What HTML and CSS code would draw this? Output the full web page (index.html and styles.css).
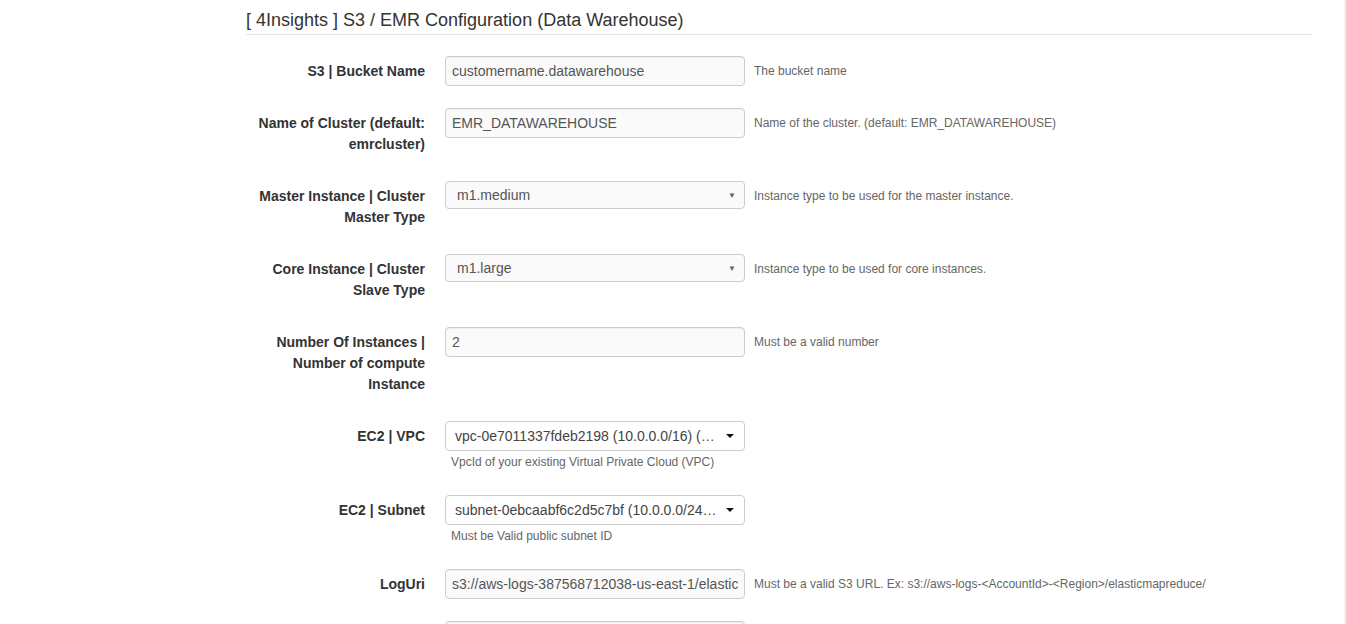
FILE: index.html
```html
<!DOCTYPE html>
<html lang="en">
<head>
    <meta charset="UTF-8">
    <meta name="viewport" content="width=device-width, initial-scale=1.0">
    <title>4Insights - S3 / EMR Configuration</title>
    <link rel="stylesheet" href="styles.css">
</head>
<body>
    <div class="page">
        <h3 class="section-title">[ 4Insights ] S3 / EMR Configuration (Data Warehouse)</h3>

        <form class="config-form">
            <div class="form-group">
                <label class="control-label">S3 | Bucket Name</label>
                <input class="form-control" type="text" value="customername.datawarehouse">
                <span class="help-inline">The bucket name</span>
            </div>

            <div class="form-group">
                <label class="control-label">Name of Cluster (default: emrcluster)</label>
                <input class="form-control" type="text" value="EMR_DATAWAREHOUSE">
                <span class="help-inline">Name of the cluster. (default: EMR_DATAWAREHOUSE)</span>
            </div>

            <div class="form-group">
                <label class="control-label">Master Instance | Cluster Master Type</label>
                <div class="form-select">
                    <span>m1.medium</span>
                    <span class="select-arrow">▼</span>
                </div>
                <span class="help-inline">Instance type to be used for the master instance.</span>
            </div>

            <div class="form-group">
                <label class="control-label">Core Instance | Cluster Slave Type</label>
                <div class="form-select">
                    <span>m1.large</span>
                    <span class="select-arrow">▼</span>
                </div>
                <span class="help-inline">Instance type to be used for core instances.</span>
            </div>

            <div class="form-group">
                <label class="control-label">Number Of Instances | Number of compute Instance</label>
                <input class="form-control" type="text" value="2">
                <span class="help-inline">Must be a valid number</span>
            </div>

            <div class="form-group">
                <label class="control-label">EC2 | VPC</label>
                <div class="field-stack">
                    <div class="select2">
                        <span class="select2-text">vpc-0e7011337fdeb2198 (10.0.0.0/16) (4Insights-VPC)</span>
                        <span class="select2-caret"></span>
                    </div>
                    <span class="help-block">VpcId of your existing Virtual Private Cloud (VPC)</span>
                </div>
            </div>

            <div class="form-group">
                <label class="control-label">EC2 | Subnet</label>
                <div class="field-stack">
                    <div class="select2">
                        <span class="select2-text">subnet-0ebcaabf6c2d5c7bf (10.0.0.0/24) (4Insights-Public)</span>
                        <span class="select2-caret"></span>
                    </div>
                    <span class="help-block">Must be Valid public subnet ID</span>
                </div>
            </div>

            <div class="form-group">
                <label class="control-label">LogUri</label>
                <input class="form-control" type="text" value="s3://aws-logs-387568712038-us-east-1/elasticmapreduce/">
                <span class="help-inline">Must be a valid S3 URL. Ex: s3://aws-logs-&lt;AccountId&gt;-&lt;Region&gt;/elasticmapreduce/</span>
            </div>

            <div class="form-group">
                <label class="control-label">Release Label</label>
                <input class="form-control" type="text" value="emr-5.20.0">
                <span class="help-inline">Release label of EMR</span>
            </div>
        </form>
    </div>
    <div class="scroll-edge"></div>
</body>
</html>
```

FILE: styles.css
```css
/* Base */
body {
    margin: 0;
    font-family: 'Liberation Sans', Arial, sans-serif;
    font-size: 14px;
    color: #333;
    background: #fff;
}

.page {
    padding: 10px 0 0 246px;
    width: 1067px;
}

.section-title {
    margin: 0 0 21px;
    padding-bottom: 4px;
    font-size: 18px;
    font-weight: normal;
    line-height: 20px;
    color: #333;
    border-bottom: 1px solid #e5e5e5;
}

/* Form rows */
.form-group {
    display: flex;
    align-items: flex-start;
    margin-bottom: 22px;
}

.control-label {
    width: 179px;
    flex-shrink: 0;
    padding: 5px 0 4px;
    margin-right: 20px;
    text-align: right;
    font-weight: bold;
    line-height: 21px;
    color: #333;
}

.form-control {
    box-sizing: border-box;
    width: 300px;
    height: 30px;
    padding: 4px 6px;
    font-family: inherit;
    font-size: 14px;
    color: #555;
    background: #fafafa;
    border: 1px solid #ccc;
    border-radius: 4px;
    box-shadow: inset 0 1px 1px rgba(0, 0, 0, 0.05);
    flex-shrink: 0;
}

.form-select {
    box-sizing: border-box;
    width: 300px;
    height: 28px;
    padding: 0 8px 0 11px;
    display: flex;
    align-items: center;
    justify-content: space-between;
    color: #555;
    background: #fafafa;
    border: 1px solid #ccc;
    border-radius: 4px;
    flex-shrink: 0;
}

.select-arrow {
    font-size: 8px;
    color: #666;
}

.help-inline {
    margin-left: 9px;
    padding-top: 7px;
    font-size: 12px;
    line-height: 17px;
    color: #666;
}

/* Select2-like dropdowns */
.field-stack {
    display: flex;
    flex-direction: column;
}

.select2 {
    box-sizing: border-box;
    width: 300px;
    height: 30px;
    padding: 0 10px 0 9px;
    display: flex;
    align-items: center;
    color: #444;
    background: #fff;
    border: 1px solid #ccc;
    border-radius: 4px;
}

.select2-text {
    flex: 1;
    white-space: nowrap;
    overflow: hidden;
    text-overflow: ellipsis;
    margin-right: 9px;
}

.select2-caret {
    width: 0;
    height: 0;
    border-left: 4px solid transparent;
    border-right: 4px solid transparent;
    border-top: 4px solid #111;
}

.help-block {
    margin: 3px 0 2px;
    padding-left: 6px;
    font-size: 12px;
    line-height: 17px;
    color: #666;
}

.scroll-edge {
    position: fixed;
    top: 0;
    right: 0;
    width: 2px;
    height: 100%;
    background: #f0f0f0;
}
```
